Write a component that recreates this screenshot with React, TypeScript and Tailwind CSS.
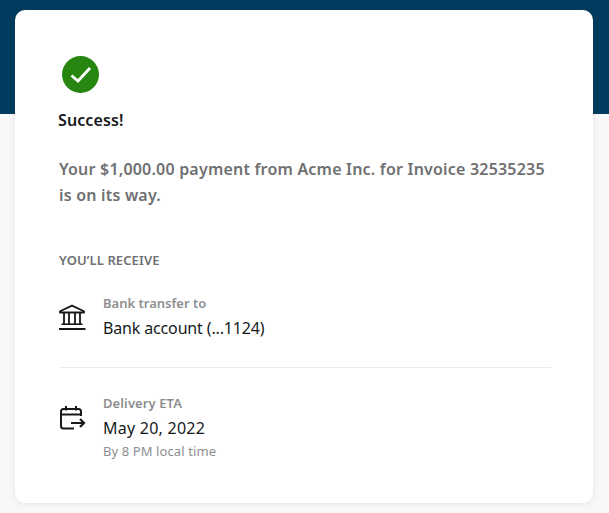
function BankIcon() {
  return (
    <svg width="30" height="30" viewBox="0 0 30 30" fill="none" stroke="#16191c" strokeWidth="2">
      <path d="M3 10.5V9.2L15 3.6L27 9.2V10.5Z" strokeWidth="1.8" strokeLinejoin="round" />
      <path d="M7 11V22M12 11V22M18 11V22M23 11V22" strokeWidth="1.8" />
      <path d="M4.5 22.2H25.5" strokeWidth="1.6" />
      <path d="M2 27H28.5" strokeWidth="2" />
    </svg>
  );
}

function CalendarIcon() {
  return (
    <svg width="30" height="30" viewBox="0 0 30 30" fill="none" stroke="#16191c" strokeWidth="2">
      <path d="M24 13V8.5C24 7 23 6 21.5 6H6.5C5 6 4 7 4 8.5V23C4 24.5 5 25.5 6.5 25.5H17" strokeLinejoin="round" />
      <path d="M4 11.5H24" />
      <path d="M9 3V7.5M19 3V7.5" />
      <path d="M14 20H27M23 16L27 20L23 24" strokeWidth="2.2" />
    </svg>
  );
}

export default function App() {
  return (
    <div className="relative h-[513px] w-[609px] overflow-hidden bg-[#f8f8f8] font-['Noto_Sans',sans-serif]">
      <div className="h-[114px] bg-[#013b5e]" />
      <div className="absolute left-[15px] top-[10px] h-[493px] w-[578px] rounded-[10px] bg-white pl-[44px] pr-[42px] pt-[46px] shadow-[0_1px_6px_rgba(0,0,0,0.08)]">
        <div className="ml-[3px] flex h-[37px] w-[37px] items-center justify-center rounded-full bg-[#26860f]">
          <svg width="24" height="24" viewBox="0 0 24 24" fill="none" stroke="white" strokeWidth="2.8">
            <path d="M2.5 12.5L9 18L21 5" />
          </svg>
        </div>
        <h1 className="-ml-[1px] mt-[16px] text-[16px] leading-[22px] font-semibold tracking-[0.1px] text-[#16191c]">Success!</h1>
        <p className="mt-[25px] w-[490px] text-[16px] leading-[26px] font-semibold tracking-[0.2px] text-[#6f7072]">
          Your $1,000.00 payment from Acme Inc. for Invoice 32535235 is on its way.
        </p>
        <div className="mt-[44px] text-[13px] leading-[16px] font-semibold tracking-[0.1px] text-[#6f7072]">YOU’LL RECEIVE</div>

        <div className="mt-[28px] flex border-b border-[#ececec] pb-[28px]">
          <div className="mt-[6px] w-[44px] shrink-0 -translate-x-[2px]">
            <BankIcon />
          </div>
          <div>
            <div className="-mt-px text-[13px] leading-[16px] font-semibold text-[#8d8e90]">Bank transfer to</div>
            <div className="mt-[6px] text-[16px] leading-[22px] tracking-[-0.15px] text-[#16191c]">Bank account (...1124)</div>
          </div>
        </div>

        <div className="mt-[28px] flex">
          <div className="mt-[7px] w-[44px] shrink-0 -translate-x-[2px]">
            <CalendarIcon />
          </div>
          <div>
            <div className="-mt-px text-[13px] leading-[16px] font-semibold tracking-[0.1px] text-[#8d8e90]">Delivery ETA</div>
            <div className="mt-[6px] text-[16px] leading-[22px] tracking-[0.25px] text-[#16191c]">May 20, 2022</div>
            <div className="mt-[4px] text-[13px] leading-[16px] tracking-[0.1px] text-[#8d8e90]">By 8 PM local time</div>
          </div>
        </div>
      </div>
    </div>
  );
}
